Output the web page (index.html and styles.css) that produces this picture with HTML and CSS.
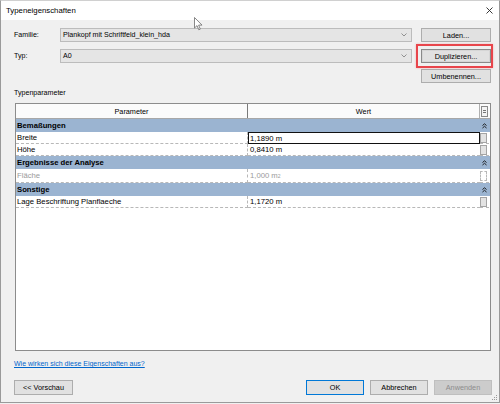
FILE: index.html
```html
<!DOCTYPE html>
<html>
<head>
<meta charset="utf-8">
<title>Typeneigenschaften</title>
<link rel="stylesheet" href="styles.css">
</head>
<body>
<div class="window">
  <div class="titlebar">
    <span class="title">Typeneigenschaften</span>
    <svg class="close" width="7" height="7" viewBox="0 0 7 7"><path d="M0.5 0.5 L6.5 6.5 M6.5 0.5 L0.5 6.5" stroke="#222" stroke-width="0.9" fill="none"/></svg>
  </div>
  <div class="client">
    <div class="toprow">
      <span class="lbl">Familie:</span>
      <div class="combo"><span>Plankopf mit Schriftfeld_klein_hda</span><svg class="arrow" width="6" height="4" viewBox="0 0 6 4"><path d="M0.5 0.5 L3 3 L5.5 0.5" stroke="#7a7a7a" stroke-width="0.8" fill="none"/></svg></div>
      <button class="btn">Laden...</button>
    </div>
    <div class="toprow row2">
      <span class="lbl">Typ:</span>
      <div class="combo"><span>A0</span><svg class="arrow" width="6" height="4" viewBox="0 0 6 4"><path d="M0.5 0.5 L3 3 L5.5 0.5" stroke="#7a7a7a" stroke-width="0.8" fill="none"/></svg></div>
      <div class="hl"><button class="btn btn-focus">Duplizieren...</button></div>
    </div>
    <div class="toprow row3">
      <span></span><span></span>
      <button class="btn">Umbenennen...</button>
    </div>
    <div class="section-label">Typenparameter</div>
    <div class="table">
      <div class="thead">
        <div class="th th1">Parameter</div>
        <div class="th th2">Wert</div>
        <div class="th3"><svg width="7" height="11" viewBox="0 0 7 11"><rect x="0.5" y="0.5" width="6" height="10" fill="#f4f4f4" stroke="#8a8a8a"/><path d="M2 4.5 H5 M2 6.5 H5" stroke="#555" stroke-width="0.8"/></svg></div>
      </div>
      <div class="group"><span>Bemaßungen</span><svg class="chev" width="5" height="6" viewBox="0 0 5 6"><path d="M0.5 2.5 L2.5 0.8 L4.5 2.5 M0.5 5 L2.5 3.3 L4.5 5" stroke="#111" stroke-width="0.9" fill="none"/></svg></div>
      <div class="row">
        <div class="c1">Breite</div>
        <div class="c2 focus">1,1890 m</div>
        <div class="c3"><span class="mini"></span></div>
      </div>
      <div class="row">
        <div class="c1">Höhe</div>
        <div class="c2">0,8410 m</div>
        <div class="c3"><span class="mini"></span></div>
      </div>
      <div class="group"><span>Ergebnisse der Analyse</span><svg class="chev" width="5" height="6" viewBox="0 0 5 6"><path d="M0.5 2.5 L2.5 0.8 L4.5 2.5 M0.5 5 L2.5 3.3 L4.5 5" stroke="#111" stroke-width="0.9" fill="none"/></svg></div>
      <div class="row row-tall disabled">
        <div class="c1">Fläche</div>
        <div class="c2">1,000 m<sup>2</sup></div>
        <div class="c3"><span class="mini mini-empty"></span></div>
      </div>
      <div class="group"><span>Sonstige</span><svg class="chev" width="5" height="6" viewBox="0 0 5 6"><path d="M0.5 2.5 L2.5 0.8 L4.5 2.5 M0.5 5 L2.5 3.3 L4.5 5" stroke="#111" stroke-width="0.9" fill="none"/></svg></div>
      <div class="row">
        <div class="c1">Lage Beschriftung Planflaeche</div>
        <div class="c2">1,1720 m</div>
        <div class="c3"><span class="mini"></span></div>
      </div>
      <div class="empty"></div>
    </div>
    <a class="link" href="#">Wie wirken sich diese Eigenschaften aus?</a>
    <div class="bottom">
      <button class="btn bbtn vorschau">&lt;&lt; Vorschau</button>
      <div class="spacer"></div>
      <button class="btn bbtn ok">OK</button>
      <button class="btn bbtn">Abbrechen</button>
      <button class="btn bbtn disabled-btn">Anwenden</button>
    </div>
  </div>
  <svg class="grip" width="6" height="6" viewBox="0 0 6 6"><g fill="#9a9a9a"><rect x="4" y="0" width="1" height="1"/><rect x="2" y="2" width="1" height="1"/><rect x="4" y="2" width="1" height="1"/><rect x="0" y="4" width="1" height="1"/><rect x="2" y="4" width="1" height="1"/><rect x="4" y="4" width="1" height="1"/></g></svg>
</div>
<svg class="cursor" width="10" height="14" viewBox="0 0 10 14"><path d="M0.5 0.5 L0.5 11 L3 8.6 L4.8 12.8 L6.3 12.1 L4.6 8.1 L8 8.1 Z" fill="#fff" stroke="#6a6a6a" stroke-width="0.8" stroke-linejoin="round"/></svg>
</body>
</html>
```

FILE: styles.css
```css
* { box-sizing: border-box; }
html, body { margin: 0; padding: 0; }
body {
  width: 500px;
  height: 404px;
  overflow: hidden;
  position: relative;
  background: #f0f0f0;
  font-family: "Liberation Sans", Arial, sans-serif;
  font-size: 7.1px;
  color: #000;
}
.window {
  position: relative;
  width: 500px;
  height: 403px;
  border: 1px solid #9a9a9a;
  border-top-color: #d0d0d0;
  background: #f0f0f0;
  display: flex;
  flex-direction: column;
}
.titlebar {
  height: 19px;
  background: #fff;
  display: flex;
  align-items: center;
  padding-left: 5px;
  padding-right: 6px;
}
.title { font-size: 7.8px; flex: 1; }
.close { display: block; }
.client {
  flex: 1;
  display: flex;
  flex-direction: column;
  padding: 8px 7px 0 13px;
}
.toprow {
  display: grid;
  grid-template-columns: 46px 361px 70px;
  height: 14px;
  align-items: center;
}
.row2 { margin-top: 7px; }
.row3 { margin-top: 6px; }
.lbl { line-height: 14px; }
.combo {
  height: 14px;
  margin-right: 9px;
  background: #e5e5e5;
  border: 1px solid #bcbcbc;
  display: flex;
  align-items: center;
  padding-left: 2px;
  padding-right: 4px;
}
.combo span { flex: 1; }
.arrow { display: block; }
.btn {
  font-family: "Liberation Sans", Arial, sans-serif;
  font-size: 7.3px;
  color: #000;
  height: 14px;
  padding: 0;
  margin: 0;
  background: #e1e1e1;
  border: 1px solid #adadad;
  display: flex;
  align-items: center;
  justify-content: center;
  width: 100%;
}
.hl { position: relative; height: 14px; }
.hl::after {
  content: "";
  position: absolute;
  left: -5px;
  right: -2px;
  top: -5px;
  bottom: -5px;
  border: 2px solid #e8454b;
  box-shadow: 0 0 2px rgba(232, 69, 75, 0.35);
}
.btn-focus { border-color: #8a8a8a; box-shadow: inset 0 0 0 1px #d6d6d6; }
.section-label {
  margin-top: 5px;
  height: 10px;
  line-height: 10px;
  font-size: 7.1px;
}
.table {
  margin: 5px 1px 0 1px;
  height: 248px;
  border: 1px solid #8c8c8c;
  background: #fff;
  display: flex;
  flex-direction: column;
  font-size: 7.7px;
}
.thead {
  display: grid;
  grid-template-columns: 232px 232px 9px;
  height: 15px;
  border-bottom: 1px solid #a8a8a8;
  background: #fbfbfb;
}
.th {
  display: flex;
  align-items: center;
  justify-content: center;
  font-size: 7.3px;
}
.th1 { border-right: 1px solid #7a7a7a; }
.th2 { border-right: 1px solid #b0b0b0; }
.th3 { display: flex; align-items: center; justify-content: center; }
.th3 svg { display: block; }
.group {
  display: grid;
  grid-template-columns: 464px 9px;
  height: 13px;
  background: #9bb4d1;
  font-weight: bold;
  align-items: center;
}
.group span { padding-left: 1px; }
.chev { display: block; margin-left: 2px; }
.row {
  display: grid;
  grid-template-columns: 232px 232px 9px;
  height: 12px;
}
.row-tall { height: 14px; }
.c1, .c2 {
  display: flex;
  align-items: center;
  border-bottom: 1px dashed #b8b8b8;
  white-space: nowrap;
}
.c1 { padding-left: 1px; border-right: 1px dashed #b8b8b8; }
.c2 { padding-left: 2px; }
.c2.focus { border: 1px solid #111; padding-left: 1px; }
.c3 {
  display: flex;
  align-items: center;
  border-bottom: 1px dashed #b8b8b8;
}
.mini {
  display: block;
  width: 7px;
  height: 10px;
  background: #e3e3e3;
  border: 1px solid #a4a4a4;
}
.mini-empty { background: #fff; border: 1px dashed #b8b8b8; }
.disabled { color: #9a9a9a; }
.disabled sup { font-size: 5px; line-height: 0; vertical-align: 3px; }
.empty { flex: 1; }
.link {
  margin-top: 8px;
  height: 10px;
  line-height: 10px;
  color: #0066cc;
  text-decoration: underline;
  font-size: 7px;
  align-self: flex-start;
}
.bottom {
  margin-top: 11px;
  height: 15px;
  display: flex;
  gap: 6px;
}
.bbtn { height: 15px; width: 58px; }
.vorschau { width: 59px; }
.spacer { flex: 1; }
.ok { border-color: #0078d7; }
.disabled-btn { background: #cccccc; border-color: #bfbfbf; color: #8c8c8c; }
.grip { position: absolute; right: 1px; bottom: 1px; display: block; }
.cursor { position: absolute; left: 194px; top: 17px; display: block; }
```
